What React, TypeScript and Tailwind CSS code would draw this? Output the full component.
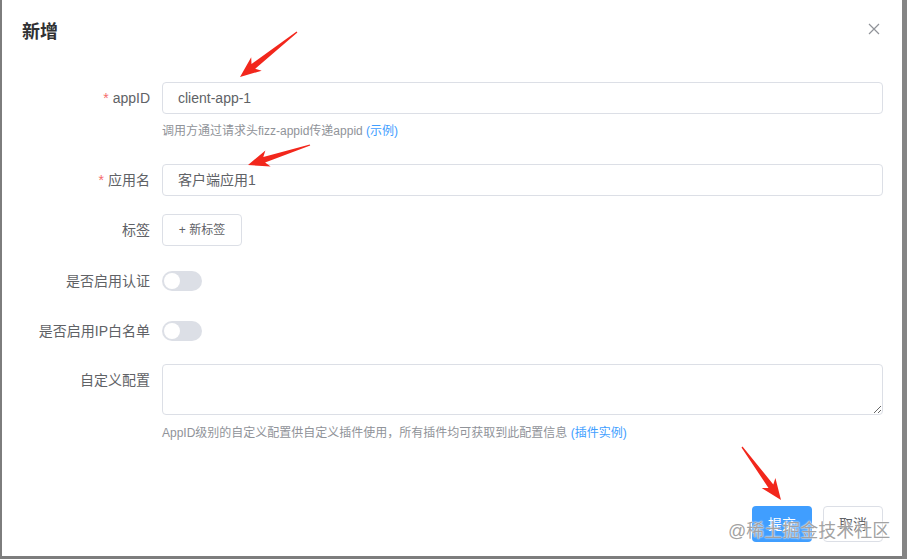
import React from 'react';

const FONT = { fontFamily: '"Liberation Sans", "Noto Sans CJK SC", sans-serif' };

// builds a tapered screenshot-style arrow from tail to tip
const arrowPoints = (x1: number, y1: number, x2: number, y2: number) => {
  const dx = x2 - x1;
  const dy = y2 - y1;
  const len = Math.hypot(dx, dy);
  const ux = dx / len;
  const uy = dy / len;
  const nx = -uy;
  const ny = ux;
  const headLen = 20;
  const baseLen = len - headLen;
  const pt = (along: number, side: number) =>
    `${(x1 + ux * along + nx * side).toFixed(1)},${(y1 + uy * along + ny * side).toFixed(1)}`;
  return [
    pt(0, 0.6),
    pt(baseLen + 3, 3),
    pt(baseLen - 1, 8.5),
    pt(len, 0),
    pt(baseLen - 1, -8.5),
    pt(baseLen + 3, -3),
    pt(0, -0.6),
  ].join(' ');
};

const Label: React.FC<{ text: string; required?: boolean }> = ({ text, required }) => (
  <div className="w-[148px] shrink-0 h-8 flex items-center justify-end pr-0 text-[14px] text-[#606266]">
    {required && <span className="text-[#f56c6c] mr-1">*</span>}
    {text}
  </div>
);

const Switch: React.FC = () => (
  <div className="h-8 flex items-center">
    <div className="w-10 h-5 rounded-full bg-[#dcdfe6] relative">
      <div className="absolute left-[2px] top-[2px] w-4 h-4 rounded-full bg-white"></div>
    </div>
  </div>
);

export default function App() {
  return (
    <div className="w-[907px] h-[559px] bg-[#7d7d7d] flex relative overflow-hidden" style={FONT}>
      {/* Dialog */}
      <div className="ml-[2px] w-[900px] h-[556px] bg-white relative flex flex-col">
        {/* Header */}
        <div className="flex items-center justify-between pl-[20px] pr-[22px] pt-[20px] h-[44px]">
          <h2 className="text-[18px] leading-6 font-bold text-[#303133]">新增</h2>
          <svg width="12" height="12" viewBox="0 0 12 12" className="-mt-[6px]">
            <path d="M1 1 L11 11 M11 1 L1 11" stroke="#909399" strokeWidth="1.2" />
          </svg>
        </div>

        {/* Form */}
        <div className="pr-[19px] pt-[38px] flex flex-col">
          {/* appID */}
          <div className="flex gap-3">
            <Label text="appID" required />
            <div className="flex-1">
              <div className="h-8 border border-[#dcdfe6] rounded-[4px] flex items-center pl-[15px] text-[14px] text-[#606266]">
                client-app-1
              </div>
              <div className="mt-2 text-[12px] leading-[18px] text-[#909399]">
                调用方通过请求头fizz-appid传递appid <span className="text-[#409eff]">(示例)</span>
              </div>
            </div>
          </div>

          {/* 应用名 */}
          <div className="flex gap-3 mt-6">
            <Label text="应用名" required />
            <div className="flex-1 h-8 border border-[#dcdfe6] rounded-[4px] flex items-center pl-[15px] text-[14px] text-[#606266]">
              客户端应用1
            </div>
          </div>

          {/* 标签 */}
          <div className="flex gap-3 mt-[18px]">
            <Label text="标签" />
            <button className="h-8 w-20 border border-[#dcdfe6] rounded-[4px] text-[12px] text-[#606266] bg-white">
              + 新标签
            </button>
          </div>

          <div className="flex gap-3 mt-[19px]">
            <Label text="是否启用认证" />
            <Switch />
          </div>

          <div className="flex gap-3 mt-[18px]">
            <Label text="是否启用IP白名单" />
            <Switch />
          </div>

          {/* 自定义配置 */}
          <div className="flex gap-3 mt-[17px]">
            <Label text="自定义配置" />
            <div className="flex-1">
              <textarea
                className="block w-full h-[51px] border border-[#dcdfe6] rounded-[4px] outline-none"
                defaultValue=""
              />
              <div className="mt-[9px] text-[12px] leading-[18px] text-[#909399]">
                AppID级别的自定义配置供自定义插件使用，所有插件均可获取到此配置信息{' '}
                <span className="text-[#409eff]">(插件实例)</span>
              </div>
            </div>
          </div>
        </div>

        {/* Footer */}
        <div className="flex justify-end gap-[11px] pr-[19px] mt-[64px]">
          <button className="h-9 w-[60px] rounded-[4px] bg-[#409eff] text-white text-[14px]">提交</button>
          <button className="h-9 w-[60px] rounded-[4px] border border-[#dcdfe6] bg-white text-[#606266] text-[14px]">
            取消
          </button>
        </div>
      </div>

      {/* Right edge of the page behind */}
      <div className="flex-1 bg-[#858585]"></div>

      {/* Annotation arrows */}
      <svg className="absolute inset-0 pointer-events-none" width="907" height="559">
        <polygon points={arrowPoints(297, 32, 240, 77)} fill="#f2271c" />
        <polygon points={arrowPoints(310, 145, 248, 165)} fill="#f2271c" />
        <polygon points={arrowPoints(742, 447, 781, 500)} fill="#f2271c" />
      </svg>

      {/* Watermark */}
      <div
        className="absolute left-[728px] top-[520px] text-[18px] leading-[22px] text-[#8a8a8a]/80 pointer-events-none whitespace-nowrap"
        style={{ textShadow: '0 0 2px #fff, 0 0 1px #fff' }}
      >
        @稀土掘金技术社区
      </div>
    </div>
  );
}
